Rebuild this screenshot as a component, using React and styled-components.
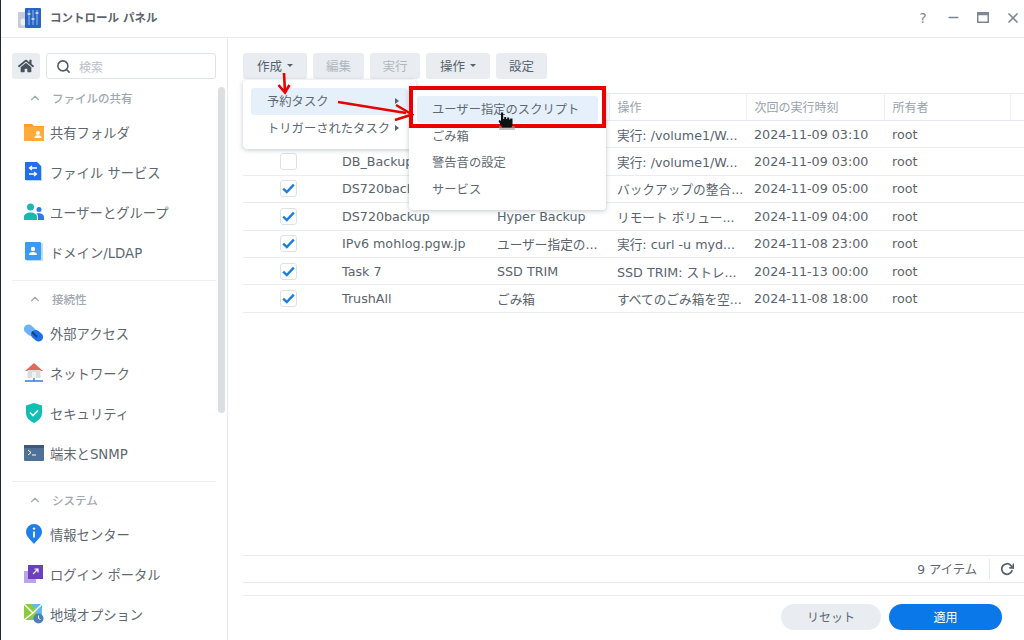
import React from "react";
import styled, { createGlobalStyle } from "styled-components";
import { FaHome } from "react-icons/fa";
import { FiSearch, FiChevronUp, FiX, FiMinus, FiRotateCw } from "react-icons/fi";

const GlobalStyle = createGlobalStyle`
  html, body {
    margin: 0;
    padding: 0;
    background: #ffffff;
  }
  body {
    font-family: "DejaVu Sans", "Noto Sans CJK JP", sans-serif;
    font-size: 13px;
    color: #56616c;
  }
`;

const Window = styled.div`
  width: 1024px;
  height: 640px;
  display: flex;
  flex-direction: column;
  overflow: hidden;
  box-sizing: border-box;
  border-left: 1px solid #1c2733;
  background: #fff;
`;
const TitleBar = styled.header`
  height: 35px;
  flex: none;
  display: flex;
  align-items: center;
  border-bottom: 1px solid #e6eaee;
  padding: 0 0 2px 17px;
`;
const AppTitle = styled.div`
  margin-left: 8px;
  padding-bottom: 1px;
  font-size: 11.5px;
  font-weight: 700;
  color: #5b646e;
  flex: 1;
`;
const WindowControls = styled.div`
  display: flex;
  align-items: center;
  gap: 8px;
  color: #7d8791;
`;
const WindowControl = styled.button`
  width: 22px;
  height: 30px;
  padding: 0;
  border: none;
  background: none;
  color: inherit;
  font: inherit;
  font-size: 14px;
  display: flex;
  align-items: center;
  justify-content: center;
`;
const Body = styled.div`
  flex: 1;
  display: flex;
  min-height: 0;
`;
const Sidebar = styled.aside`
  position: relative;
  width: 227px;
  flex: none;
  box-sizing: border-box;
  border-right: 1px solid #e6eaee;
  padding: 15px 11px 0 11px;
  overflow: hidden;
`;
const SearchRow = styled.div`
  display: flex;
  gap: 6px;
  height: 26px;
  margin-bottom: 1px;
`;
const HomeButton = styled.button`
  width: 28px;
  height: 26px;
  padding: 0;
  border: none;
  border-radius: 3px;
  background: #e9edf2;
  color: #49535d;
  display: flex;
  align-items: center;
  justify-content: center;
`;
const SearchBox = styled.div`
  flex: 1;
  box-sizing: border-box;
  border: 1px solid #dfe4e9;
  border-radius: 3px;
  display: flex;
  align-items: center;
  gap: 8px;
  padding-left: 9px;
  color: #525c66;
  font-size: 12px;
`;
const Placeholder = styled.span`
  color: #b9c0c8;
`;
const Section = styled.section`
  padding: 4px 0 8px;
  width: 204px;
  border-bottom: 1px solid #edf0f3;
`;
const SectionHeader = styled.div`
  height: 28px;
  display: flex;
  align-items: center;
  gap: 10px;
  padding-left: 16px;
  font-size: 11.5px;
  font-weight: 500;
  color: #a0a8b1;
`;
const NavItem = styled.div`
  height: 40px;
  display: flex;
  align-items: center;
  gap: 6px;
  padding-left: 12px;
  font-size: 13.3px;
  color: #5e6871;
`;
const Scrollbar = styled.div`
  position: absolute;
  left: 217px;
  top: 49px;
  width: 7px;
  height: 326px;
  border-radius: 4px;
  background: #dcdfe2;
`;
const Main = styled.main`
  flex: 1;
  min-width: 0;
  display: flex;
  flex-direction: column;
  padding-left: 15px;
`;
const Toolbar = styled.div`
  position: relative;
  display: flex;
  gap: 6px;
  height: 26px;
  margin-top: 15px;
  margin-bottom: 14px;
`;
const ToolButton = styled.button`
  height: 26px;
  width: ${(props) => props.$width}px;
  padding: 0 0 1px;
  border: none;
  border-radius: 3px;
  background: #e9edf2;
  color: ${(props) => (props.disabled ? "#b0b8c0" : "#56616c")};
  font: inherit;
  font-size: 12.5px;
  display: flex;
  align-items: center;
  justify-content: center;
  gap: 5px;
`;
const Caret = styled.span`
  width: 0;
  height: 0;
  border-left: 3px solid transparent;
  border-right: 3px solid transparent;
  border-top: 3px solid #56616c;
`;
const TableWrap = styled.div`
  flex: 1;
  min-height: 0;
`;
const Table = styled.table`
  width: 781px;
  table-layout: fixed;
  border-collapse: collapse;
  border-top: 1px solid #e6eaee;
`;
const HeaderCell = styled.th`
  height: 24px;
  padding: 0 8px 2px;
  text-align: left;
  font-weight: 400;
  font-size: 12px;
  color: #98a2ac;
  border-bottom: 1px solid #e6eaee;
  border-right: 1px solid #edf0f3;
  &:last-child {
    border-right: none;
  }
`;
const Row = styled.tr`
  height: 27.4px;
`;
const Cell = styled.td`
  padding: 0 8px;
  font-size: 12.7px;
  color: #59636d;
  white-space: nowrap;
  overflow: hidden;
  border-bottom: 1px solid #eaedf0;
`;
const CheckCell = styled(Cell)`
  padding: 0 0 0 37px;
`;
const CheckBox = styled.span`
  display: flex;
  box-sizing: border-box;
  width: 17px;
  height: 17px;
  border: 1px solid #dde2e7;
  border-radius: 3px;
  align-items: center;
  justify-content: center;
  background: #fff;
`;
const StatusBar = styled.div`
  height: 26px;
  flex: none;
  display: flex;
  align-items: center;
  justify-content: flex-end;
  border-top: 1px solid #e6eaee;
  border-bottom: 1px solid #e6eaee;
  font-size: 12.3px;
  color: #5e6871;
`;
const ItemCount = styled.span`
  padding-right: 12px;
  border-right: 1px solid #e6eaee;
  height: 20px;
  display: flex;
  align-items: center;
`;
const RefreshButton = styled.span`
  width: 34px;
  display: flex;
  align-items: center;
  justify-content: center;
  color: #56616c;
`;
const ActionBar = styled.footer`
  flex: none;
  margin-top: 12px;
  border-top: 1px solid #e9ecef;
  padding: 8px 22px 10px 0;
  display: flex;
  justify-content: flex-end;
  gap: 8px;
`;
const PillButton = styled.button`
  height: 26px;
  width: ${(props) => props.$width}px;
  padding: 0 0 2px;
  border: none;
  border-radius: 13px;
  background: ${(props) => (props.$primary ? "#0a78e8" : "#e9edf2")};
  color: ${(props) => (props.$primary ? "#fff" : "#5e6871")};
  font: inherit;
  font-size: 12px;
`;
const Menu = styled.div`
  position: absolute;
  z-index: 2;
  left: ${(props) => props.$left}px;
  top: ${(props) => props.$top}px;
  width: ${(props) => props.$width}px;
  box-sizing: border-box;
  padding: 8px;
  background: #fff;
  border-radius: 4px;
  box-shadow: 0 1px 5px rgba(40, 55, 70, 0.28);
`;
const MenuItem = styled.div`
  height: 26.6px;
  display: flex;
  align-items: center;
  justify-content: space-between;
  padding: 0 ${(props) => (props.$tight ? 9 : 15)}px 0 ${(props) => (props.$tight ? 16 : 15)}px;
  border-radius: 3px;
  background: ${(props) => (props.$active ? "#e6f0fa" : "transparent")};
  font-size: 12.3px;
  color: #5e6871;
  white-space: nowrap;
`;
const MenuArrow = styled.span`
  width: 0;
  height: 0;
  border-top: 3.5px solid transparent;
  border-bottom: 3.5px solid transparent;
  border-left: 4px solid #56616c;
`;
const RedBox = styled.div`
  position: absolute;
  z-index: 3;
  left: 166px;
  top: 33px;
  width: 197px;
  height: 42px;
  box-sizing: border-box;
  border: 4px solid #e90000;
`;
const Overlay = styled.svg`
  position: absolute;
  z-index: 4;
  left: ${(props) => props.$left}px;
  top: ${(props) => props.$top}px;
`;

const Check = () => (
  <svg width="13" height="11" viewBox="0 0 13 11">
    <path d="M1.2 5.6 4.8 9 11.8 1.6" fill="none" stroke="#1a7fe0" strokeWidth="2.4" />
  </svg>
);

const AppIcon = () => (
  <svg width="24" height="22" viewBox="0 0 24 22">
    <rect x="0" y="5" width="12" height="16" rx="1" fill="#c9ccd8" />
    <ellipse cx="5" cy="15" rx="2.5" ry="3.5" fill="#eef0f4" />
    <rect x="7" y="1" width="16" height="20" rx="1" fill="#2a63c4" />
    <path d="M11 3v15M15 3v15M19 3v15" stroke="#8fc0f0" strokeWidth="1" />
    <path d="M9.5 7h3M13.5 12h3M17.5 6h3" stroke="#dbeaff" strokeWidth="1.6" />
  </svg>
);

const FolderIcon = () => (
  <svg width="20" height="18" viewBox="0 0 20 18">
    <path d="M0 1h8l2 2h10v15H0z" fill="#f9a02b" />
    <rect x="0" y="4" width="20" height="14" fill="#fdab3d" />
    <circle cx="14" cy="10" r="2" fill="#fff" />
    <path d="M10.5 15c0-2 1.5-2.7 3.5-2.7s3.5.7 3.5 2.7z" fill="#fff" />
  </svg>
);

const FileServiceIcon = () => (
  <svg width="20" height="20" viewBox="0 0 20 20">
    <path d="M2 1h12l4 4v14H2z" fill="#bcd8f8" />
    <path d="M1 0h12l4 4v14H1z" fill="#1f6fe6" />
    <path d="M13 6H6M8 4 5.5 6 8 8M5 12h7M10 10l2.500 2L10 14" fill="none" stroke="#fff" strokeWidth="1.300" />
  </svg>
);

const UsersIcon = () => (
  <svg width="20" height="18" viewBox="0 0 20 18">
    <circle cx="6.500" cy="4" r="3.500" fill="#1cb8b0" />
    <circle cx="15" cy="6.500" r="2.500" fill="#2f7be6" />
    <path d="M0 17v-3c0-3 3-4.500 6.500-4.500S13 11 13 14v3z" fill="#1cb8b0" />
    <path d="M14 17v-3c0-1.500-.5-2.600-1.500-3.500 3-1 7.500 0 7.500 3.500v3z" fill="#2f7be6" />
  </svg>
);

const DomainIcon = () => (
  <svg width="20" height="20" viewBox="0 0 20 20">
    <rect x="2" y="1" width="17" height="18" rx="1" fill="#bcdcfb" />
    <rect x="1" y="0" width="16" height="18" rx="1" fill="#3b9af2" />
    <circle cx="9" cy="7" r="2.200" fill="#fff" />
    <path d="M5 13c0-2.300 1.800-3 4-3s4 .7 4 3z" fill="#fff" />
  </svg>
);

const ExternalIcon = () => (
  <svg width="20" height="20" viewBox="0 0 20 20">
    <rect x="-1" y="3" width="13" height="9" rx="4.500" transform="rotate(40 6 8)" fill="#6cb2f5" />
    <rect x="7" y="8" width="13" height="9" rx="4.500" transform="rotate(40 13 12)" fill="#1f6fe6" />
    <path d="M8 9l5 5" stroke="#12408a" strokeWidth="1.800" />
  </svg>
);

const NetworkIcon = () => (
  <svg width="20" height="20" viewBox="0 0 20 20">
    <path d="M10 0 19 8H1z" fill="#e2675f" />
    <rect x="3.500" y="7" width="13" height="8" fill="#d9dde1" />
    <rect x="8" y="9" width="4" height="6" fill="#eef0f2" />
    <path d="M1 18h18M10 15v3" stroke="#2f7be6" strokeWidth="1.400" />
  </svg>
);

const ShieldIcon = () => (
  <svg width="20" height="20" viewBox="0 0 20 20">
    <path d="M10 0l8 2.500V10c0 5-4 8-8 10-4-2-8-5-8-10V2.500z" fill="#12bdb4" />
    <path d="M6 9.500l3 3 5-5" fill="none" stroke="#fff" strokeWidth="1.600" />
  </svg>
);

const TerminalIcon = () => (
  <svg width="20" height="16" viewBox="0 0 20 16">
    <rect width="20" height="16" rx="1" fill="#4f7196" />
    <rect width="20" height="3" fill="#3d5a7c" />
    <path d="M4 5l3 2.500L4 10M8 10h4" fill="none" stroke="#fff" strokeWidth="1" />
  </svg>
);

const InfoIcon = () => (
  <svg width="20" height="20" viewBox="0 0 20 20">
    <path d="M10 0a8 8 0 0 1 8 8c0 4.500-4 7-8 12-4-5-8-7.500-8-12a8 8 0 0 1 8-8z" fill="#1f7fe8" />
    <circle cx="10" cy="4.600" r="1.200" fill="#fff" />
    <path d="M10 7.500v6" stroke="#fff" strokeWidth="1.800" />
  </svg>
);

const LoginIcon = () => (
  <svg width="20" height="20" viewBox="0 0 20 20">
    <rect x="0" y="7" width="12" height="12" fill="#b9a6e6" />
    <rect x="4" y="1" width="15" height="14" fill="#6b3fc0" />
    <path d="M9 10l5-5M10.500 5H14v3.500" fill="none" stroke="#fff" strokeWidth="1.200" />
  </svg>
);

const RegionIcon = () => (
  <svg width="20" height="20" viewBox="0 0 20 20">
    <rect x="0" y="0" width="18" height="16" fill="#62b8ef" />
    <path d="M0 0h8l5 8-5 8H0z" fill="#8ccb3f" />
    <path d="M0 0l9 9 9-9M9 9l-9 7" stroke="#fff" strokeWidth="1.400" fill="none" />
    <circle cx="14.500" cy="14.500" r="5" fill="#4f7fb5" />
    <path d="M14.500 11.500v3l2 1" stroke="#fff" strokeWidth="1" fill="none" />
  </svg>
);

const HandCursor = () => (
  <>
    <rect x="2" y="15" width="16" height="4" rx="1" fill="#999" opacity="0.6" />
    <path d="M4 1.500h2.200v6.500h1V6h2v2h1V6.500h2V8.500h1V7.500h2.300V14l-1 2.500H5L1.500 10l1.300-1L4 10z" fill="#111" />
  </>
);

const sections = [
  {
    title: "ファイルの共有",
    items: [
      ["共有フォルダ", <FolderIcon />],
      ["ファイル サービス", <FileServiceIcon />],
      ["ユーザーとグループ", <UsersIcon />],
      ["ドメイン/LDAP", <DomainIcon />],
    ],
  },
  {
    title: "接続性",
    items: [
      ["外部アクセス", <ExternalIcon />],
      ["ネットワーク", <NetworkIcon />],
      ["セキュリティ", <ShieldIcon />],
      ["端末とSNMP", <TerminalIcon />],
    ],
  },
  {
    title: "システム",
    items: [
      ["情報センター", <InfoIcon />],
      ["ログイン ポータル", <LoginIcon />],
      ["地域オプション", <RegionIcon />],
    ],
  },
];

const tasks = [
  { on: true, name: "", type: "", action: "実行: /volume1/W...", next: "2024-11-09 03:10" },
  { on: false, name: "DB_Backup", type: "", action: "実行: /volume1/W...", next: "2024-11-09 03:00" },
  { on: true, name: "DS720backup", type: "", action: "バックアップの整合...", next: "2024-11-09 05:00" },
  { on: true, name: "DS720backup", type: "Hyper Backup", action: "リモート ボリュー...", next: "2024-11-09 04:00" },
  { on: true, name: "IPv6 mohlog.pgw.jp", type: "ユーザー指定の...", action: "実行: curl -u myd...", next: "2024-11-08 23:00" },
  { on: true, name: "Task 7", type: "SSD TRIM", action: "SSD TRIM: ストレ...", next: "2024-11-13 00:00" },
  { on: true, name: "TrushAll", type: "ごみ箱", action: "すべてのごみ箱を空...", next: "2024-11-08 18:00" },
];

const columnWidths = [91, 155, 120, 137, 138, 126, 14];

const App = () => (
  <Window>
    <GlobalStyle />
    <TitleBar>
      <AppIcon />
      <AppTitle>コントロール パネル</AppTitle>
      <WindowControls>
        <WindowControl>?</WindowControl>
        <WindowControl>
          <FiMinus size={15} strokeWidth={2.500} />
        </WindowControl>
        <WindowControl>
          <svg width="12" height="11" viewBox="0 0 12 11">
            <rect x="0.750" y="0.750" width="10.500" height="9.500" fill="none" stroke="#7d8791" strokeWidth="1.500" />
            <rect x="0.750" y="0.750" width="10.500" height="2.500" fill="#7d8791" />
          </svg>
        </WindowControl>
        <WindowControl>
          <FiX size={16} strokeWidth={2.500} />
        </WindowControl>
      </WindowControls>
    </TitleBar>
    <Body>
      <Sidebar>
        <SearchRow>
          <HomeButton>
            <FaHome size={16} />
          </HomeButton>
          <SearchBox>
            <FiSearch size={15} strokeWidth={2.500} />
            <Placeholder>検索</Placeholder>
          </SearchBox>
        </SearchRow>
        {sections.map((section) => (
          <Section key={section.title}>
            <SectionHeader>
              <FiChevronUp size={14} />
              {section.title}
            </SectionHeader>
            {section.items.map(([label, icon]) => (
              <NavItem key={label}>
                {icon}
                {label}
              </NavItem>
            ))}
          </Section>
        ))}
        <Scrollbar />
      </Sidebar>
      <Main>
        <Toolbar>
          <ToolButton $width={64}>
            作成 <Caret />
          </ToolButton>
          <ToolButton $width={51} disabled>
            編集
          </ToolButton>
          <ToolButton $width={50} disabled>
            実行
          </ToolButton>
          <ToolButton $width={64}>
            操作 <Caret />
          </ToolButton>
          <ToolButton $width={51}>設定</ToolButton>
          <Menu $left={0} $top={27} $width={173}>
            <MenuItem $active $tight>
              予約タスク
              <MenuArrow />
            </MenuItem>
            <MenuItem $tight>
              トリガーされたタスク
              <MenuArrow />
            </MenuItem>
          </Menu>
          <Menu $left={166} $top={35} $width={197}>
            <MenuItem $active>ユーザー指定のスクリプト</MenuItem>
            <MenuItem>ごみ箱</MenuItem>
            <MenuItem>警告音の設定</MenuItem>
            <MenuItem>サービス</MenuItem>
          </Menu>
          <RedBox />
          <Overlay $left={34} $top={20} width="14" height="22" viewBox="0 0 14 22">
            <path d="M7 0 8 19M1.500 12 8 19.500 12.500 12" fill="none" stroke="#e90000" strokeWidth="2.600" />
          </Overlay>
          <Overlay $left={93} $top={46} width="78" height="26" viewBox="0 0 78 26">
            <path d="M2 3 70 14" fill="none" stroke="#e90000" strokeWidth="2.500" />
            <path d="M60 6 76 15.500 59 21" fill="none" stroke="#e90000" strokeWidth="2.500" />
          </Overlay>
          <Overlay $left={254} $top={58} width="20" height="20" viewBox="0 0 20 20">
            <HandCursor />
          </Overlay>
        </Toolbar>
        <TableWrap>
          <Table>
            <colgroup>
              {columnWidths.map((width, i) => (
                <col key={i} width={width} />
              ))}
            </colgroup>
            <thead>
              <tr>
                <HeaderCell />
                <HeaderCell />
                <HeaderCell />
                <HeaderCell>操作</HeaderCell>
                <HeaderCell>次回の実行時刻</HeaderCell>
                <HeaderCell>所有者</HeaderCell>
                <HeaderCell />
              </tr>
            </thead>
            <tbody>
              {tasks.map((task, i) => (
                <Row key={i}>
                  <CheckCell>
                    <CheckBox>{task.on && <Check />}</CheckBox>
                  </CheckCell>
                  <Cell>{task.name}</Cell>
                  <Cell>{task.type}</Cell>
                  <Cell>{task.action}</Cell>
                  <Cell>{task.next}</Cell>
                  <Cell>root</Cell>
                  <Cell />
                </Row>
              ))}
            </tbody>
          </Table>
        </TableWrap>
        <StatusBar>
          <ItemCount>9 アイテム</ItemCount>
          <RefreshButton>
            <FiRotateCw size={14} strokeWidth={3} />
          </RefreshButton>
        </StatusBar>
        <ActionBar>
          <PillButton $width={100}>リセット</PillButton>
          <PillButton $width={113} $primary>
            適用
          </PillButton>
        </ActionBar>
      </Main>
    </Body>
  </Window>
);

export default App;
